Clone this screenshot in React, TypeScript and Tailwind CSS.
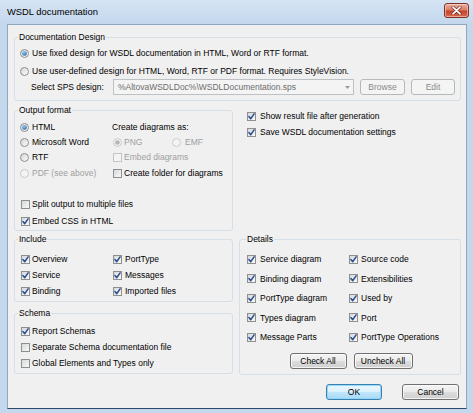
import React from "react";

function Defs() {
  return (
    <svg width="0" height="0" className="absolute">
      <defs>
        <linearGradient id="boxg" x1="0" y1="0" x2="1" y2="1">
          <stop offset="0" stopColor="#d4d6d9" />
          <stop offset="1" stopColor="#fbfbfb" />
        </linearGradient>
        <radialGradient id="dotg" cx="0.4" cy="0.35" r="0.7">
          <stop offset="0" stopColor="#8fd0f7" />
          <stop offset="1" stopColor="#1c5ea8" />
        </radialGradient>
      </defs>
    </svg>
  );
}

function Box({ checked = false, disabled = false }: { checked?: boolean; disabled?: boolean }) {
  return (
    <svg width="9" height="9" viewBox="0 0 9 9" className="shrink-0">
      <rect x="0.5" y="0.5" width="8" height="8" fill={disabled ? "#f4f4f4" : "url(#boxg)"} stroke={disabled ? "#c4c4c4" : "#8e8f8f"} />
      {checked && (
        <path d="M1.9 4.6 L3.7 6.7 L7.1 1.9" fill="none" stroke="#2f4f8f" strokeWidth="1.5" strokeLinejoin="round" strokeLinecap="round" />
      )}
    </svg>
  );
}

function Radio({ on = false, disabled = false }: { on?: boolean; disabled?: boolean }) {
  return (
    <svg width="9" height="9" viewBox="0 0 9 9" className="shrink-0">
      <circle cx="4.5" cy="4.5" r="4" fill={disabled ? "#f4f4f4" : "url(#boxg)"} stroke={disabled ? "#cacaca" : "#8e8f8f"} />
      {on && <circle cx="4.5" cy="4.5" r="2.3" fill={disabled ? "#b5b5b5" : "url(#dotg)"} />}
    </svg>
  );
}

function Btn({ children, className }: { children: React.ReactNode; className: string }) {
  return (
    <div
      className={
        "h-[16px] rounded-[3px] border border-[#707070] bg-[linear-gradient(to_bottom,#f4f4f4_0%,#ebebeb_48%,#dddddd_52%,#cfcfcf_100%)] shadow-[inset_0_0_0_1px_rgba(255,255,255,0.75)] flex items-center justify-center " +
        className
      }
    >
      {children}
    </div>
  );
}

function DisBtn({ children, className }: { children: React.ReactNode; className: string }) {
  return (
    <div className={"h-[16px] rounded-[3px] border border-[#b5b9bc] bg-[#f4f4f4] text-[#8a8a8a] flex items-center justify-center " + className}>
      {children}
    </div>
  );
}

export default function App() {
  return (
    <div className="w-[473px] h-[413px] bg-[#c3d7ed] flex flex-col font-['Liberation_Sans',Arial,sans-serif] text-[8.5px] text-black leading-none overflow-hidden">
      <Defs />
      {/* title bar */}
      <div className="h-[24px] shrink-0 flex items-center justify-between pl-[7px] pr-[4px] bg-[linear-gradient(to_bottom,#d6e4f4,#c3d7ed)]">
        <span className="text-[9.4px] mb-[1px]">WSDL documentation</span>
        <div className="w-[25px] h-[15px] mb-[4px] rounded-[3px] border border-[#7b3325] bg-[linear-gradient(to_bottom,#eab0a2_0%,#dc7c66_45%,#c4442c_55%,#d86a50_100%)] shadow-[inset_0_0_0_1px_rgba(255,220,210,0.55)] flex items-center justify-center">
          <svg width="11" height="9" viewBox="0 0 11 9">
            <path d="M2 1.2 L9 7.8 M9 1.2 L2 7.8" stroke="#6e2a1f" strokeWidth="3" strokeLinecap="round" />
            <path d="M2 1.2 L9 7.8 M9 1.2 L2 7.8" stroke="#ffffff" strokeWidth="1.7" strokeLinecap="round" />
          </svg>
        </div>
      </div>

      {/* client area */}
      <div className="flex-1 ml-[7px] mr-[6px] mb-[4px] bg-[#f0f0f0] border border-[#8fa7c1] border-b-[#2d4a68] pt-[6px] pl-[6px] pr-[5px] flex flex-col">
        {/* Documentation Design */}
        <fieldset className="border border-[#d5dfe5] rounded-[3px] p-0 m-0 min-w-0">
          <legend className="ml-[3px] px-[1px] leading-[12px]">Documentation Design</legend>
          <div className="pt-[1px] pl-[5px] pb-[5px] flex flex-col">
            <div className="h-[18px] flex items-center gap-[3px]">
              <Radio on />
              <span>Use fixed design for WSDL documentation in HTML, Word or RTF format.</span>
            </div>
            <div className="h-[18px] flex items-center gap-[3px]">
              <Radio />
              <span>Use user-defined design for HTML, Word, RTF or PDF format. Requires StyleVision.</span>
            </div>
            <div className="h-[16px] -mt-[1px] flex items-center">
              <span className="ml-[11px] w-[82px] shrink-0">Select SPS design:</span>
              <div className="w-[241px] h-[16px] border border-[#bcc1c5] bg-[#f4f4f4] flex items-center pl-[4px] pr-[3px] text-[#6d6d6d]">
                <span className="flex-1">%AltovaWSDLDoc%\WSDLDocumentation.sps</span>
                <svg width="5" height="3" viewBox="0 0 5 3">
                  <path d="M0 0 L5 0 L2.5 3 Z" fill="#9a9a9a" />
                </svg>
              </div>
              <DisBtn className="ml-[6px] w-[45px]">Browse</DisBtn>
              <DisBtn className="ml-[6px] w-[44px]">Edit</DisBtn>
            </div>
          </div>
        </fieldset>

        {/* Row A */}
        <div className="mt-[3px] flex gap-[6px]">
          <fieldset className="w-[219px] shrink-0 border border-[#d5dfe5] rounded-[3px] p-0 m-0 min-w-0">
            <legend className="ml-[3px] px-[1px] leading-[12px]">Output format</legend>
            <div className="pt-[4px] pl-[5px] flex flex-col">
              <div className="grid grid-cols-[93px_1fr]">
                <div className="h-[15px] flex items-center gap-[3px]">
                  <Radio on />
                  <span>HTML</span>
                </div>
                <div className="h-[15px] flex items-center">
                  <span className="-ml-[1px]">Create diagrams as:</span>
                </div>
                <div className="h-[15px] flex items-center gap-[3px]">
                  <Radio />
                  <span>Microsoft Word</span>
                </div>
                <div className="h-[15px] flex items-center text-[#a0a0a0]">
                  <div className="w-[59px] flex items-center gap-[2px]">
                    <Radio on disabled />
                    <span>PNG</span>
                  </div>
                  <div className="flex items-center gap-[4px]">
                    <Radio disabled />
                    <span>EMF</span>
                  </div>
                </div>
                <div className="h-[15px] flex items-center gap-[3px]">
                  <Radio />
                  <span>RTF</span>
                </div>
                <div className="h-[15px] flex items-center gap-[2px] text-[#a0a0a0]">
                  <Box disabled />
                  <span>Embed diagrams</span>
                </div>
                <div className="h-[17px] flex items-center gap-[3px] text-[#a0a0a0]">
                  <Radio disabled />
                  <span>PDF (see above)</span>
                </div>
                <div className="h-[17px] flex items-center gap-[2px]">
                  <Box />
                  <span>Create folder for diagrams</span>
                </div>
              </div>
              <div className="mt-[14px] h-[17px] pl-[1px] flex items-center gap-[2px]">
                <Box />
                <span>Split output to multiple files</span>
              </div>
              <div className="h-[17px] pl-[1px] flex items-center gap-[2px]">
                <Box checked />
                <span>Embed CSS in HTML</span>
              </div>
            </div>
          </fieldset>
          <div className="flex-1 pt-[4px] pl-[8px] flex flex-col">
            <div className="h-[16px] flex items-center gap-[4px]">
              <Box checked />
              <span>Show result file after generation</span>
            </div>
            <div className="h-[16px] flex items-center gap-[4px]">
              <Box checked />
              <span>Save WSDL documentation settings</span>
            </div>
          </div>
        </div>

        {/* Row B */}
        <div className="mt-[2px] flex gap-[6px] items-start">
          <div className="w-[219px] shrink-0 flex flex-col">
            <fieldset className="border border-[#d5dfe5] rounded-[3px] p-0 m-0 min-w-0">
              <legend className="ml-[3px] px-[1px] leading-[12px]">Include</legend>
              <div className="pt-[6px] pb-[2px] pl-[6px] grid grid-cols-[92px_1fr]">
                {[
                  ["Overview", "PortType"],
                  ["Service", "Messages"],
                  ["Binding", "Imported files"],
                ].map(([a, b]) => (
                  <React.Fragment key={a}>
                    <div className="h-[16px] flex items-center gap-[2px]">
                      <Box checked />
                      <span>{a}</span>
                    </div>
                    <div className="h-[16px] flex items-center gap-[3px]">
                      <Box checked />
                      <span>{b}</span>
                    </div>
                  </React.Fragment>
                ))}
              </div>
            </fieldset>
            <fieldset className="mt-[5px] border border-[#d5dfe5] rounded-[3px] p-0 m-0 min-w-0">
              <legend className="ml-[3px] px-[1px] leading-[12px]">Schema</legend>
              <div className="pt-[4px] pb-[2px] pl-[6px] flex flex-col">
                <div className="h-[16px] flex items-center gap-[2px]">
                  <Box checked />
                  <span>Report Schemas</span>
                </div>
                <div className="h-[16px] flex items-center gap-[2px]">
                  <Box />
                  <span>Separate Schema documentation file</span>
                </div>
                <div className="h-[16px] flex items-center gap-[2px]">
                  <Box />
                  <span>Global Elements and Types only</span>
                </div>
              </div>
            </fieldset>
          </div>

          <fieldset className="flex-1 border border-[#d5dfe5] rounded-[3px] p-0 m-0 min-w-0">
            <legend className="ml-[6px] px-[1px] leading-[12px]">Details</legend>
            <div className="pt-[4.5px] pl-[7px] grid grid-cols-[102px_1fr]">
              {[
                ["Service diagram", "Source code"],
                ["Binding diagram", "Extensibilities"],
                ["PortType diagram", "Used by"],
                ["Types diagram", "Port"],
                ["Message Parts", "PortType Operations"],
              ].map(([a, b]) => (
                <React.Fragment key={a}>
                  <div className="h-[19.5px] flex items-center gap-[4px]">
                    <Box checked />
                    <span>{a}</span>
                  </div>
                  <div className="h-[19.5px] flex items-center gap-[3px]">
                    <Box checked />
                    <span>{b}</span>
                  </div>
                </React.Fragment>
              ))}
            </div>
            <div className="mt-[6px] pb-[5px] flex justify-center gap-[7px] pl-[2px]">
              <Btn className="w-[57px] h-[15px]">Check All</Btn>
              <Btn className="w-[59px] h-[15px]">Uncheck All</Btn>
            </div>
          </fieldset>
        </div>

        {/* OK / Cancel */}
        <div className="mt-[9px] flex justify-end gap-[20px] pr-[2px]">
          <div className="w-[56px] h-[16px] rounded-[3px] border border-[#3c7fb1] bg-[linear-gradient(to_bottom,#ecf7fd_0%,#dcf1fc_48%,#c0e6fc_52%,#a9daf5_100%)] shadow-[inset_0_0_0_1px_rgba(140,215,250,0.9)] flex items-center justify-center">
            OK
          </div>
          <Btn className="w-[57px]">Cancel</Btn>
        </div>
      </div>
    </div>
  );
}
